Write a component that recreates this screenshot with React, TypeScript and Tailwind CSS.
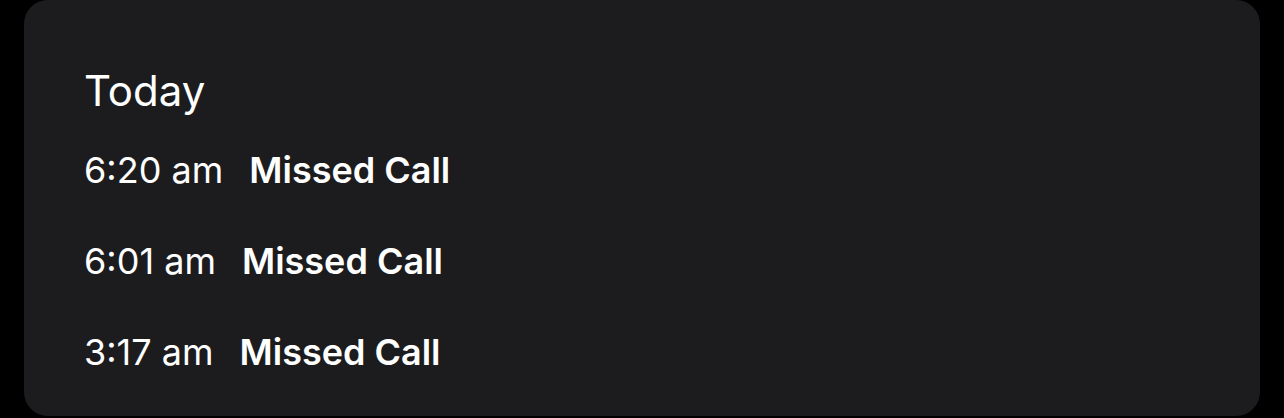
const calls = [
  { time: "6:20 am", label: "Missed Call" },
  { time: "6:01 am", label: "Missed Call" },
  { time: "3:17 am", label: "Missed Call" },
];

export default function App() {
  return (
    <div
      className="w-[1284px] h-[418px] bg-black px-6 pb-[2px]"
      style={{ fontFamily: "Inter, 'Noto Sans', sans-serif" }}
    >
      <div className="h-full bg-[#1c1c1e] rounded-[24px] pl-[60px] pt-[66px]">
        <h2 className="text-[42px] leading-[50px] text-white font-normal">Today</h2>
        <div className="mt-[33px] flex flex-col gap-[49px]">
          {calls.map((c, i) => (
            <div key={i} className="flex items-baseline gap-[26px] text-[36px] leading-[42px] text-white">
              <span className="font-normal">{c.time}</span>
              <span className="font-semibold">{c.label}</span>
            </div>
          ))}
        </div>
      </div>
    </div>
  );
}
